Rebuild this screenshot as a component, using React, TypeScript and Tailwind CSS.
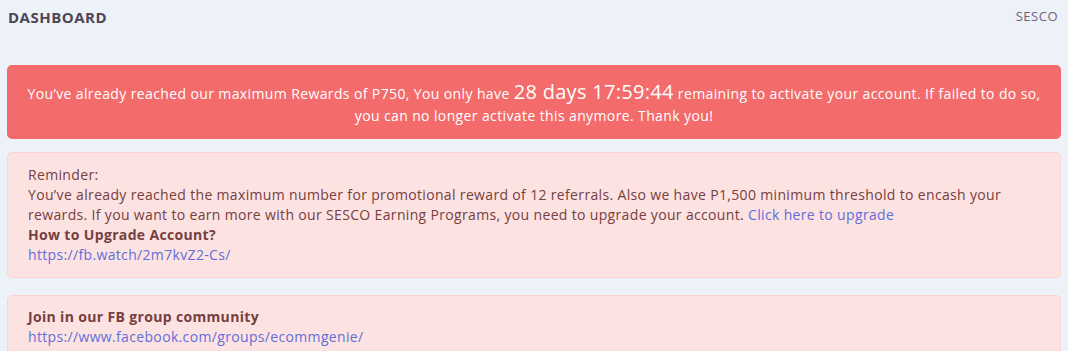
export default function App() {
  return (
    <div className="min-h-screen bg-[#edf1f8] px-[7px] font-['Open_Sans',sans-serif]">
      {/* header */}
      <div className="flex h-[34px] items-center justify-between">
        <h1 className="pl-px text-[15px] font-bold tracking-[0.5px] text-[#4e4656]">DASHBOARD</h1>
        <span className="pr-[3px] text-[13px] tracking-[0.5px] text-[#6e627a]">SESCO</span>
      </div>

      {/* countdown alert */}
      <div className="mt-[31px] rounded-[5px] bg-[#f36b6b] px-4 pt-[16px] pb-[12px] text-center text-[14px] leading-[22px] tracking-[0.38px] text-white">
        You’ve already reached our maximum Rewards of P750, You only have{" "}
        <span className="text-[20px] tracking-[0.3px]">28 days 17:59:44</span> remaining to activate your account. If
        failed to do so, you can no longer activate this anymore. Thank you!
      </div>

      {/* reminder */}
      <div className="mt-[13px] rounded-[5px] border border-[#fbd3d3] bg-[#fde2e2] px-[20px] pt-[12px] pb-[12px] text-[14px] leading-[20px] tracking-[0.34px] text-[#75403f]">
        <p>Reminder:</p>
        <p>
          You’ve already reached the maximum number for promotional reward of 12 referrals. Also we have P1,500 minimum
          threshold to encash your rewards. If you want to earn more with our SESCO Earning Programs, you need to upgrade
          your account. <a className="text-[#5f6fd9]">Click here to upgrade</a>
        </p>
        <p className="font-bold">How to Upgrade Account?</p>
        <a className="text-[#5f6fd9]">https://fb.watch/2m7kvZ2-Cs/</a>
      </div>

      {/* fb group */}
      <div className="mt-[17px] rounded-[5px] border border-[#fbd3d3] bg-[#fde2e2] px-[20px] pt-[11px] pb-[12px] text-[14px] leading-[20px] tracking-[0.34px] text-[#75403f]">
        <p className="font-bold">Join in our FB group community</p>
        <a className="text-[#5f6fd9]">https://www.facebook.com/groups/ecommgenie/</a>
      </div>
    </div>
  );
}
